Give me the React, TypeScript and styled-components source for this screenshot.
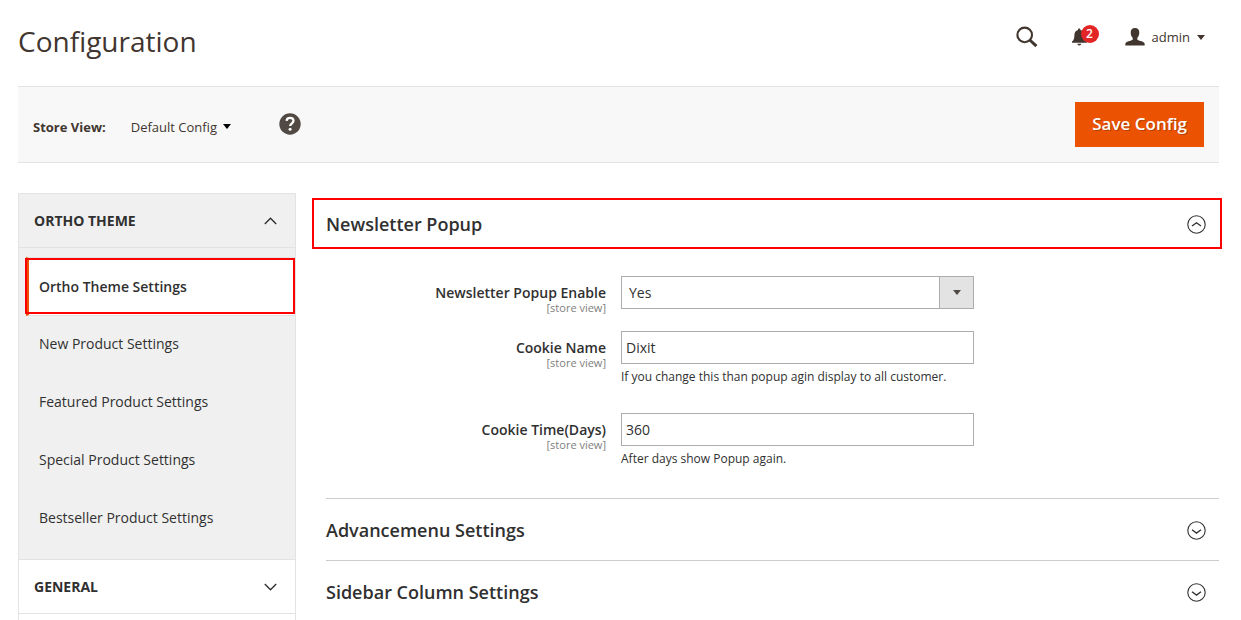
import React from 'react';
import styled, { createGlobalStyle, css } from 'styled-components';

const GlobalStyle = createGlobalStyle`
  *, *::before, *::after { box-sizing: border-box; }
  body {
    margin: 0;
    background: #fff;
    color: #303030;
    font-family: 'Open Sans', 'Noto Sans', sans-serif;
    font-size: 14px;
    line-height: 20px;
    overflow: hidden;
  }
  button, input, select { font: inherit; color: inherit; border-radius: 0; }
`;

const Page = styled.div`
  padding: 0 22px 0 18px;
`;

const Header = styled.header`
  display: flex;
  justify-content: space-between;
  align-items: flex-start;
  height: 86px;
  padding: 22px 14px 0 0;
`;

const PageTitle = styled.h1`
  margin: 0;
  font-size: 28px;
  line-height: 38px;
  font-weight: 400;
  color: #41362f;
`;

const HeaderActions = styled.div`
  display: flex;
  align-items: center;
  height: 30px;
`;

const PlainButton = styled.button`
  display: flex;
  align-items: center;
  padding: 0;
  border: 0;
  background: transparent;
  color: #41362f;
  cursor: pointer;
`;

const NotificationButton = styled(PlainButton)`
  position: relative;
  margin: 0 26px 0 34px;
  width: 27px;
`;

const Badge = styled.span`
  position: absolute;
  top: -3px;
  right: 0;
  width: 18px;
  height: 18px;
  border-radius: 9px;
  background: #e22626;
  color: #fff;
  font-size: 12px;
  line-height: 18px;
  font-weight: 600;
  text-align: center;
`;

const AccountButton = styled(PlainButton)`
  font-size: 13px;

  span { margin: 0 7px; }
`;

const Toolbar = styled.section`
  display: flex;
  align-items: center;
  height: 77px;
  padding: 0 15px;
  margin-bottom: 30px;
  border: solid #e3e3e3;
  border-width: 1px 0;
  background: #f8f8f8;
`;

const StoreLabel = styled.span`
  margin: 4px 25px 0 0;
  font-weight: 700;
  font-size: 13px;
  color: #41362f;
`;

const StoreButton = styled(PlainButton)`
  margin: 4px 48px 0 0;
  gap: 6px;
  font-size: 13px;

  svg { color: #000; }
`;

const HelpButton = styled(PlainButton)`
  padding-bottom: 2px;
`;

const SaveButton = styled.button`
  height: 45px;
  margin-left: auto;
  padding: 0 17px 2px;
  border: 0;
  background: #eb5202;
  color: #fff;
  font-size: 17px;
  font-weight: 600;
  text-shadow: 1px 1px 0 rgba(0, 0, 0, 0.25);
  cursor: pointer;
`;

const Columns = styled.div`
  display: flex;
  align-items: flex-start;
  gap: 30px;
`;

const Sidebar = styled.nav`
  flex: 0 0 278px;
  padding-bottom: 54px;
  border: 1px solid #e3e3e3;
`;

const NavTitle = styled.button<{ $open?: boolean }>`
  display: flex;
  justify-content: space-between;
  align-items: center;
  width: 100%;
  height: 54px;
  padding: 0 18px 0 15px;
  border: 0;
  border-bottom: 1px solid #e3e3e3;
  background: ${(p) => (p.$open ? '#f0f0f0' : '#fff')};
  font-weight: 700;
  text-transform: uppercase;
  cursor: pointer;
`;

const NavList = styled.ul`
  margin: 0;
  padding: 9px 0 12px 7px;
  list-style: none;
  background: #f0f0f0;
  border-bottom: 1px solid #e3e3e3;
`;

const NavLink = styled.a<{ $active?: boolean }>`
  position: relative;
  display: flex;
  align-items: center;
  height: 58px;
  padding-left: 13px;
  color: #303030;
  text-decoration: none;

  ${(p) =>
    p.$active &&
    css`
      height: 59px;
      margin-bottom: -1px;
      padding-left: 10px;
      border: solid #e3e3e3;
      border-width: 1px 0;
      border-left: 3px solid #eb5202;
      background: #fff;
      font-weight: 600;

      &::after {
        content: '';
        position: absolute;
        inset: 0 0 1px -4px;
        border: 2px solid #f00;
      }
    `}
`;

const Main = styled.main`
  flex: 1;
  min-width: 0;
`;

const Section = styled.section`
  border-bottom: 1px solid #ccc;
`;

const SectionHead = styled.h2<{ $marked?: boolean }>`
  position: relative;
  margin: 0;

  ${(p) =>
    p.$marked &&
    css`
      &::after {
        content: '';
        position: absolute;
        inset: 5px -3px 5px -14px;
        border: 2px solid #f00;
        pointer-events: none;
      }
    `}
`;

const SectionToggle = styled.button`
  display: flex;
  justify-content: space-between;
  align-items: center;
  width: 100%;
  height: 61px;
  padding: 0 13px 0 0;
  border: 0;
  background: transparent;
  font-size: 18px;
  font-weight: 600;
  cursor: pointer;

  svg { margin-top: 2px; }
`;

const Fields = styled.div`
  display: grid;
  gap: 17px;
  padding: 22px 0 20px;
`;

const FieldRow = styled.div`
  display: grid;
  grid-template-columns: 280px minmax(0, 353px);
  column-gap: 15px;
`;

const FieldLabel = styled.label`
  padding-top: 8px;
  font-weight: 600;
  line-height: 18px;
  text-align: right;
`;

const Scope = styled.span`
  display: block;
  color: #808080;
  font-size: 11px;
  font-weight: 400;
  line-height: 12px;
`;

const TextInput = styled.input`
  display: block;
  width: 100%;
  height: 33px;
  padding: 0 4px;
  border: 1px solid #adadad;
  background: #fff;
`;

const SelectBox = styled.div`
  position: relative;
`;

const Select = styled.select`
  display: block;
  width: 100%;
  height: 33px;
  padding: 0 42px 0 7px;
  border: 1px solid #adadad;
  background: #fff;
  appearance: none;
`;

const SelectArrow = styled.span`
  position: absolute;
  top: 0;
  right: 0;
  display: flex;
  align-items: center;
  justify-content: center;
  width: 35px;
  height: 33px;
  border: 1px solid #adadad;
  background: #e3e3e3;
  color: #514943;
  pointer-events: none;
`;

const Note = styled.p`
  margin: 4px 0 10px;
  font-size: 12px;
  line-height: 18px;
`;

const Caret = () => (
  <svg width="8" height="5" viewBox="0 0 8 5" aria-hidden="true">
    <path d="M0 0h8L4 5z" fill="currentColor" />
  </svg>
);

const Chevron = ({ up }: { up?: boolean }) => (
  <svg width="13" height="8" viewBox="0 0 13 8" fill="none" stroke="#303030" strokeWidth="1.4" aria-hidden="true">
    <path d={up ? 'M.8 7 6.5 1.3l5.700 5.700' : 'M.8 1l5.700 5.700L12.200 1'} />
  </svg>
);

const CircleChevron = ({ up }: { up?: boolean }) => (
  <svg width="19" height="19" viewBox="0 0 19 19" fill="none" stroke="#303030" strokeWidth="1.1" aria-hidden="true">
    <circle cx="9.5" cy="9.5" r="8.7" />
    <path d={up ? 'M5 11l4.5-3.300 4.5 3.300' : 'M5 8.800l4.5 3.300L14 8.800'} strokeWidth="1.3" />
  </svg>
);

const SearchIcon = () => (
  <svg width="22" height="22" viewBox="0 0 22 22" fill="none" stroke="currentColor" aria-hidden="true">
    <circle cx="8.7" cy="8.9" r="7.3" strokeWidth="2.1" />
    <path d="M13.8 14l6.600 6.200" strokeWidth="3" />
  </svg>
);

const BellIcon = () => (
  <svg width="15" height="18" viewBox="0 0 15 18" fill="currentColor" aria-hidden="true">
    <path d="M7.2 0.6c.8 0 1.2.5 1.2 1.3 2.500.6 3.700 2.500 3.700 5.100 0 3.600.6 5.200 2.700 6.600v1.100H0v-1.100c1.800-1.400 2.400-3 2.400-6.600 0-2.600 1.200-4.500 3.600-5.100 0-.8.4-1.300 1.200-1.300z" />
    <path d="M5.300 15.700h4c-.2 1.100-.9 1.700-2 1.700s-1.800-.6-2-1.700z" />
  </svg>
);

const UserIcon = () => (
  <svg width="20" height="18" viewBox="0 0 20 18" fill="currentColor" aria-hidden="true">
    <path d="M10 0c2.900 0 4.300 1.700 4.300 4.400 0 2.500-.9 4.300-2 5.400v1.600c.4.700 1.500 1 3.300 1.500 2.500.7 4.100 1.300 4.100 3.500V17.500H.3v-1.100c0-2.200 1.600-2.800 4.100-3.500 1.800-.5 2.900-.8 3.300-1.500V9.800c-1.100-1.100-2-2.900-2-5.400C5.700 1.700 7.100 0 10 0z" />
  </svg>
);

const HelpIcon = () => (
  <svg width="22" height="22" viewBox="0 0 22 22" fill="none" aria-hidden="true">
    <circle cx="11" cy="11" r="10.700" fill="#514943" />
    <path d="M7.600 7.900C7.700 5.800 9 4.800 11 4.800s3.500 1 3.500 2.900c0 2.500-3.300 2.700-3.300 5.400" stroke="#fff" strokeWidth="2.300" />
    <circle cx="11.100" cy="16.200" r="1.500" fill="#fff" />
  </svg>
);

const links = [
  'Ortho Theme Settings',
  'New Product Settings',
  'Featured Product Settings',
  'Special Product Settings',
  'Bestseller Product Settings',
];

const textFields = [
  { id: 'cookie-name', label: 'Cookie Name', value: 'Dixit', note: 'If you change this than popup agin display to all customer.' },
  { id: 'cookie-time', label: 'Cookie Time(Days)', value: '360', note: 'After days show Popup again.' },
];

export default function App() {
  return (
    <>
      <GlobalStyle />
      <Page>
        <Header>
          <PageTitle>Configuration</PageTitle>
          <HeaderActions>
            <PlainButton aria-label="Search">
              <SearchIcon />
            </PlainButton>
            <NotificationButton aria-label="Notifications">
              <BellIcon />
              <Badge>2</Badge>
            </NotificationButton>
            <AccountButton>
              <UserIcon />
              <span>admin</span>
              <Caret />
            </AccountButton>
          </HeaderActions>
        </Header>

        <Toolbar>
          <StoreLabel>Store View:</StoreLabel>
          <StoreButton>
            Default Config
            <Caret />
          </StoreButton>
          <HelpButton aria-label="Help">
            <HelpIcon />
          </HelpButton>
          <SaveButton>Save Config</SaveButton>
        </Toolbar>

        <Columns>
          <Sidebar>
            <NavTitle $open aria-expanded="true">
              Ortho Theme
              <Chevron up />
            </NavTitle>
            <NavList>
              {links.map((text, i) => (
                <li key={text}>
                  <NavLink href="#" $active={i === 0}>
                    {text}
                  </NavLink>
                </li>
              ))}
            </NavList>
            <NavTitle aria-expanded="false">
              General
              <Chevron />
            </NavTitle>
          </Sidebar>

          <Main>
            <Section>
              <SectionHead $marked>
                <SectionToggle aria-expanded="true">
                  Newsletter Popup
                  <CircleChevron up />
                </SectionToggle>
              </SectionHead>
              <Fields>
                <FieldRow>
                  <FieldLabel htmlFor="popup-enable">
                    Newsletter Popup Enable
                    <Scope>[store view]</Scope>
                  </FieldLabel>
                  <SelectBox>
                    <Select id="popup-enable" defaultValue="Yes">
                      <option>Yes</option>
                      <option>No</option>
                    </Select>
                    <SelectArrow>
                      <Caret />
                    </SelectArrow>
                  </SelectBox>
                </FieldRow>
                {textFields.map((f) => (
                  <FieldRow key={f.id}>
                    <FieldLabel htmlFor={f.id}>
                      {f.label}
                      <Scope>[store view]</Scope>
                    </FieldLabel>
                    <div>
                      <TextInput id={f.id} defaultValue={f.value} />
                      <Note>{f.note}</Note>
                    </div>
                  </FieldRow>
                ))}
              </Fields>
            </Section>
            {['Advancemenu Settings', 'Sidebar Column Settings'].map((title) => (
              <Section key={title}>
                <SectionHead>
                  <SectionToggle aria-expanded="false">
                    {title}
                    <CircleChevron />
                  </SectionToggle>
                </SectionHead>
              </Section>
            ))}
          </Main>
        </Columns>
      </Page>
    </>
  );
}
